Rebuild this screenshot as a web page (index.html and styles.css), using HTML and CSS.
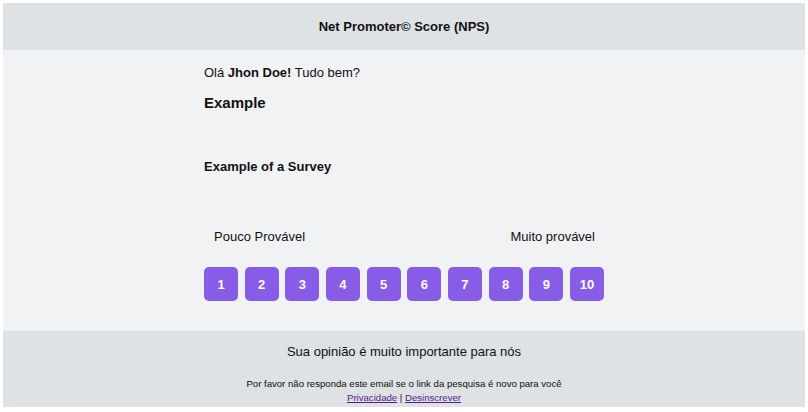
FILE: index.html
```html
<!DOCTYPE html>
<html lang="pt">
<head>
<meta charset="utf-8">
<title>NPS</title>
<link rel="stylesheet" href="styles.css">
</head>
<body>
<div class="page">
  <header class="top">Net Promoter© Score (NPS)</header>
  <main class="main">
    <div class="content">
      <p class="greet">Olá <b>Jhon Doe!</b> Tudo bem?</p>
      <h1 class="title">Example</h1>
      <h2 class="subtitle">Example of a Survey</h2>
      <div class="labels"><span>Pouco Provável</span><span>Muito provável</span></div>
      <div class="scale">
        <a class="btn">1</a><a class="btn">2</a><a class="btn">3</a><a class="btn">4</a><a class="btn">5</a><a class="btn">6</a><a class="btn">7</a><a class="btn">8</a><a class="btn">9</a><a class="btn">10</a>
      </div>
    </div>
  </main>
  <footer class="foot">
    <p class="foot-main">Sua opinião é muito importante para nós</p>
    <p class="foot-small">Por favor não responda este email se o link da pesquisa é novo para você</p>
    <p class="foot-links"><a href="#">Privacidade</a> | <a href="#">Desinscrever</a></p>
  </footer>
</div>
</body>
</html>
```
FILE: styles.css
```css
* { box-sizing: border-box; }
html, body { margin: 0; padding: 0; background: #fff; }
body { padding: 3px; font-family: "Liberation Sans", Arial, sans-serif; color: #111; }
.page { width: 802px; }
.top {
  background: #dee2e4;
  height: 47px;
  display: flex;
  align-items: center;
  justify-content: center;
  font-weight: bold;
  font-size: 13px;
}
.main { background: #f1f2f4; padding: 15px 0 30px; }
.content { width: 400px; margin: 0 auto; }
.greet { margin: 0; font-size: 13px; line-height: 16px; }
.title { margin: 13px 0 0; font-size: 15px; line-height: 18px; font-weight: bold; }
.subtitle { margin: 47px 0 0; font-size: 13px; line-height: 16px; font-weight: bold; }
.labels {
  margin-top: 54px;
  display: flex;
  justify-content: space-between;
  padding: 0 9px 0 10px;
  font-size: 13px;
  line-height: 16px;
}
.scale { margin-top: 22px; display: flex; gap: 6.67px; }
.btn {
  width: 34px;
  height: 34px;
  border-radius: 5px;
  background: #875ce6;
  color: #fff;
  font-weight: bold;
  font-size: 13px;
  display: flex;
  align-items: center;
  justify-content: center;
}
.foot { background: #dee2e4; padding: 13px 0 3px; text-align: center; }
.foot-main { margin: 0; font-size: 13px; line-height: 16px; }
.foot-small { margin: 18px 0 0; font-size: 9.6px; line-height: 12px; }
.foot-links { margin: 2px 0 0; font-size: 9.6px; line-height: 12px; }
.foot-links a { color: #551a8b; }
```
